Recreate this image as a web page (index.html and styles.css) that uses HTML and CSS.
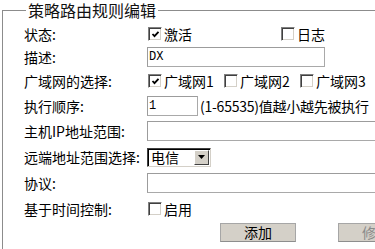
FILE: index.html
```html
<!DOCTYPE html>
<html lang="zh">
<head>
<meta charset="utf-8">
<title>策略路由规则编辑</title>
<link rel="stylesheet" href="styles.css">
</head>
<body>
<fieldset class="panel">
  <legend class="panel-title">策略路由规则编辑</legend>
  <div class="form">
    <div class="label">状态:</div>
    <div class="field">
      <span class="opt opt-wide"><span class="cb"><svg class="tick" viewBox="0 0 9 9" width="9" height="9"><polyline points="1.5,4 3.5,6.2 7.5,1.8" fill="none" stroke="#000" stroke-width="1.8"/></svg></span><span class="opt-text">激活</span></span>
      <span class="opt"><span class="cb"></span><span class="opt-text">日志</span></span>
    </div>

    <div class="label">描述:</div>
    <div class="field"><span class="txt txt-desc">DX</span></div>

    <div class="label">广域网的选择:</div>
    <div class="field">
      <span class="opt opt-wan"><span class="cb"><svg class="tick" viewBox="0 0 9 9" width="9" height="9"><polyline points="1.5,4 3.5,6.2 7.5,1.8" fill="none" stroke="#000" stroke-width="1.8"/></svg></span><span class="opt-text">广域网1</span></span>
      <span class="opt opt-wan"><span class="cb"></span><span class="opt-text">广域网2</span></span>
      <span class="opt"><span class="cb"></span><span class="opt-text">广域网3</span></span>
    </div>

    <div class="label">执行顺序:</div>
    <div class="field"><span class="txt txt-order">1</span><span class="hint">(1-65535)值越小越先被执行</span></div>

    <div class="label">主机IP地址范围:</div>
    <div class="field"><span class="txt txt-long"></span></div>

    <div class="label">远端地址范围选择:</div>
    <div class="field">
      <span class="select"><span class="select-val">电信</span><span class="select-btn"><svg viewBox="0 0 7 4" width="7" height="4"><polygon points="0,0 7,0 3.5,4" fill="#000"/></svg></span></span>
    </div>

    <div class="label">协议:</div>
    <div class="field"><span class="txt txt-long"></span></div>

    <div class="label">基于时间控制:</div>
    <div class="field"><span class="opt"><span class="cb"></span><span class="opt-text">启用</span></span></div>

    <div class="actions">
      <button class="btn" type="button">添加</button>
      <button class="btn btn-dim" type="button">修改</button>
    </div>
  </div>
</fieldset>
</body>
</html>
```

FILE: styles.css
```css
html, body {
  margin: 0;
  padding: 0;
  background: #fff;
  overflow: hidden;
}
body {
  width: 375px;
  height: 249px;
  font-family: "Noto Sans CJK SC", "Noto Sans", sans-serif;
  font-size: 14px;
  color: #000;
}
.panel {
  margin: 0 0 0 2px;
  padding: 2px 0 0 21px;
  border: 1px solid #8c8c8c;
  width: 480px;
  height: 260px;
  box-sizing: border-box;
}
.panel-title {
  font-size: 16px;
  line-height: 20px;
  padding: 0 2px;
  margin: 0 0 0 2px;
  color: #111;
}
.form {
  display: grid;
  grid-template-columns: 123px 1fr;
  grid-template-rows: 24px 22px 26px 24px 26px 26px 26px 26px auto;
  align-items: center;
}
.label {
  line-height: 20px;
  white-space: nowrap;
}
.field {
  display: flex;
  align-items: center;
  line-height: 20px;
  white-space: nowrap;
}
.opt {
  display: inline-flex;
  align-items: center;
}
.opt-wide { width: 133px; }
.opt-wan { width: 76px; }
.cb {
  width: 14px;
  height: 14px;
  box-sizing: border-box;
  margin-left: 1px;
  margin-right: 2px;
  border: 1px solid;
  border-color: #808080 #fff #fff #808080;
  box-shadow: inset 1px 1px 0 #404040, inset -1px -1px 0 #d4d0c8;
  background: #fff;
  display: inline-flex;
  align-items: center;
  justify-content: center;
  flex: none;
}
.tick { display: block; }
.txt {
  display: inline-block;
  box-sizing: border-box;
  height: 20px;
  border: 1px solid #a9a9a9;
  border-top-color: #9c9c9c;
  border-left-color: #9c9c9c;
  font-family: "Liberation Mono", monospace;
  font-size: 12px;
  line-height: 18px;
  padding-left: 1px;
  background: #fff;
}
.txt-desc { width: 178px; }
.txt-order { width: 51px; }
.txt-long { width: 300px; }
.hint { margin-left: 2px; letter-spacing: -0.25px; }
.select {
  display: inline-flex;
  align-items: center;
  box-sizing: border-box;
  width: 64px;
  height: 19px;
  border: 1px solid;
  border-color: #404040 #d4d0c8 #d4d0c8 #404040;
  box-shadow: inset 1px 1px 0 #000;
  background: #fff;
}
.select-val {
  flex: 1;
  padding-left: 3px;
  line-height: 17px;
}
.select-btn {
  width: 15px;
  height: 15px;
  margin-right: 1px;
  box-sizing: border-box;
  background: #d4d0c8;
  border: 1px solid;
  border-color: #fff #404040 #404040 #fff;
  display: flex;
  align-items: center;
  justify-content: center;
}
.select-btn svg { display: block; }
.actions {
  grid-column: 1 / -1;
  display: flex;
  gap: 42px;
  padding-left: 196px;
  margin-top: 1px;
}
.btn {
  width: 76px;
  height: 19px;
  padding: 0;
  margin: 0;
  box-sizing: border-box;
  background: #d4d0c8;
  border: 1px solid #a6a6a6;
  border-bottom-color: #8e8e8e;
  font-family: "Noto Sans CJK SC", sans-serif;
  font-size: 14px;
  line-height: 17px;
  color: #000;
}
.btn-dim { color: #8a8a8a; }
```
